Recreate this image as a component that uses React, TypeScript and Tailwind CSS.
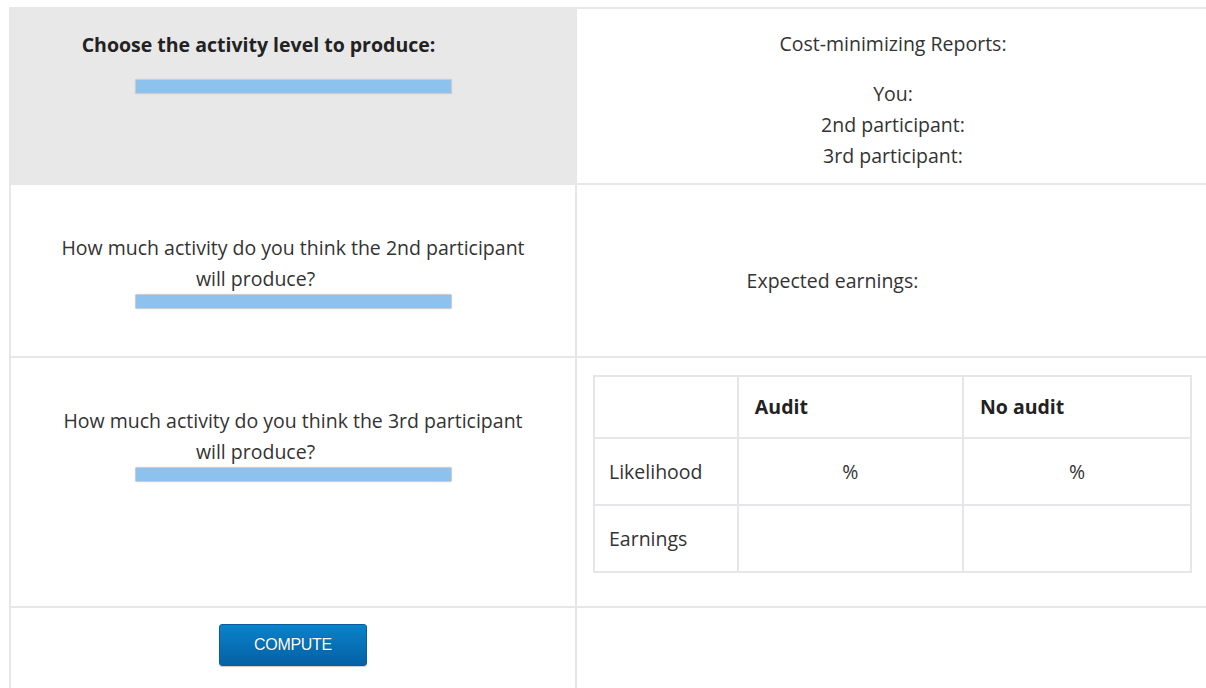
import React from "react";

const font = { fontFamily: '"Open Sans", "Noto Sans", Arial, sans-serif' };

function Slider() {
  return (
    <div className="mx-auto h-[15px] w-[317px] rounded-[2px] border border-[#c9cdd1] bg-[#8dc1ee] shadow-[0_0_1px_rgba(0,0,0,0.25)]" />
  );
}

function Question({ who }: { who: string }) {
  return (
    <div className="px-2 pt-[47px] text-center leading-[31px]">
      <div>How much activity do you think the {who} participant</div>
      <div>
        will produce?
        <span className="inline-block w-[75px]" />
      </div>
      <Slider />
    </div>
  );
}

export default function App() {
  const cell = "border-r-2 border-b-2 border-[#e5e7ea]";
  return (
    <div
      className="h-[688px] w-[1206px] overflow-hidden bg-white text-[19.5px] text-[#333]"
      style={font}
    >
      <div className="ml-[9px] mt-[7px] grid w-[1200px] grid-cols-[566px_634px] border-l-2 border-t-2 border-[#e5e7ea]">
        {/* row 1 */}
        <div className={`${cell} h-[176px] bg-[#e8e8e8] pt-[20px] text-center`}>
          <div className="font-bold leading-[31px] text-[#222]">
            Choose the activity level to produce:
            <span className="inline-block w-[69px]" />
          </div>
          <div className="mt-[19px]">
            <Slider />
          </div>
        </div>
        <div className={`${cell} h-[176px] pt-[19px] text-center leading-[31px]`}>
          <div className="mb-[19px]">Cost-minimizing Reports:</div>
          <div>You:</div>
          <div>2nd participant:</div>
          <div>3rd participant:</div>
        </div>

        {/* row 2 */}
        <div className={`${cell} h-[173px]`}>
          <Question who="2nd" />
        </div>
        <div className={`${cell} h-[173px] pt-[80px] text-center leading-[31px]`}>
          Expected earnings:
          <span className="inline-block w-[121px]" />
        </div>

        {/* row 3 */}
        <div className={`${cell} h-[250px]`}>
          <Question who="3rd" />
        </div>
        <div className={`${cell} h-[250px] pl-[16px] pt-[17px]`}>
          <table className="w-[599px] border-collapse">
            <colgroup>
              <col className="w-[144px]" />
              <col className="w-[226px]" />
              <col className="w-[229px]" />
            </colgroup>
            <thead>
              <tr className="h-[62px]">
                <th className="border-2 border-[#e4e6e9]" />
                <th className="border-2 border-[#e4e6e9] px-4 text-left font-bold text-[#222]">
                  Audit
                </th>
                <th className="border-2 border-[#e4e6e9] px-4 text-left font-bold text-[#222]">
                  No audit
                </th>
              </tr>
            </thead>
            <tbody>
              <tr className="h-[67px]">
                <td className="border-2 border-[#e4e6e9] px-[14px]">Likelihood</td>
                <td className="border-2 border-[#e4e6e9] text-center">%</td>
                <td className="border-2 border-[#e4e6e9] text-center">%</td>
              </tr>
              <tr className="h-[67px]">
                <td className="border-2 border-[#e4e6e9] px-[14px]">Earnings</td>
                <td className="border-2 border-[#e4e6e9]" />
                <td className="border-2 border-[#e4e6e9]" />
              </tr>
            </tbody>
          </table>
        </div>

        {/* row 4 */}
        <div className={`${cell} h-[100px] pt-[16px]`}>
          <button
            className="mx-auto block h-[42px] w-[148px] rounded-[3px] border border-[#0b5c98] bg-gradient-to-b from-[#0a82cb] to-[#0561a5] text-[16px] tracking-[-0.3px] text-white shadow-[0_1px_1px_rgba(0,0,0,0.2)] [text-shadow:0_0_1px_rgba(0,0,0,0.4)]"
            style={{ fontFamily: '"Liberation Sans", Arial, sans-serif' }}
          >
            COMPUTE
          </button>
        </div>
        <div className={`${cell} h-[100px]`} />
      </div>
    </div>
  );
}
